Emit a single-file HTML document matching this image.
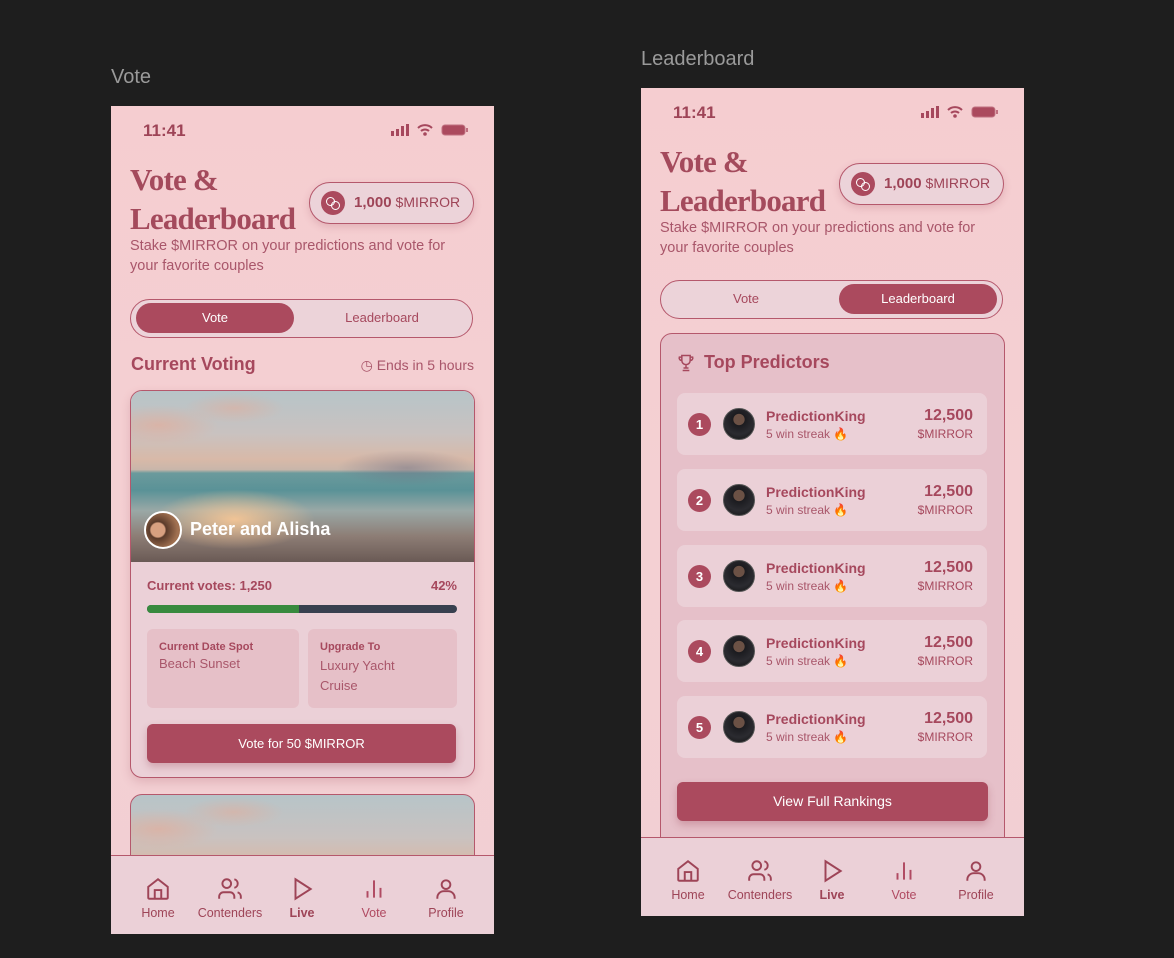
<!DOCTYPE html>
<html><head><meta charset="utf-8"><style>
*{margin:0;padding:0;box-sizing:border-box}
body{width:1174px;height:958px;background:#1e1e1e;position:relative;overflow:hidden;font-family:"Liberation Sans",sans-serif;color:#a6485d}
.abs{position:absolute}
.lbl{position:absolute;color:#9a9a9a;font-size:20px}
.phone{position:absolute;width:383px;height:828px;background:linear-gradient(180deg,#f5cdd0 0%,#f4d0d3 50%,#f2cfd3 100%);overflow:hidden}
.time{position:absolute;left:32px;top:15px;font-size:17px;font-weight:bold;color:#9e4457}
.title{position:absolute;left:19px;font-family:"Liberation Serif",serif;font-size:31px;font-weight:bold;color:#a44a5c;line-height:40px;letter-spacing:-0.8px}
.sub{position:absolute;left:19px;font-size:14.5px;line-height:20px;color:#a9566a;width:340px}
.pill{position:absolute;width:165px;height:42px;border:1.5px solid #b5586c;border-radius:21px;background:#ecd3d9;box-shadow:0 3px 8px rgba(150,60,80,.2)}
.pill .c{position:absolute;left:11px;top:8px;width:24px;height:24px;border-radius:50%;background:#ab4a5e}
.pill .c:before,.pill .c:after{content:"";position:absolute;width:7px;height:7px;border:1.5px solid #fff;border-radius:50%}
.pill .c:before{left:5px;top:6px}.pill .c:after{left:10px;top:10px}
.pill .t{position:absolute;left:44px;top:11px;font-size:15px;font-weight:bold;color:#9e4457}
.pill .t span{font-weight:normal;font-size:14px;margin-left:4px}
.tog{position:absolute;left:19px;width:343px;height:39px;border:1.5px solid #b5586c;border-radius:20px;background:#ecd3d9}
.tog .a{position:absolute;top:3px;height:30px;width:158px;border-radius:15px;background:#ab4a5e;color:#fff;font-size:13px;text-align:center;line-height:30px}
.tog .i{position:absolute;top:3px;height:30px;font-size:13px;text-align:center;line-height:30px;color:#a6485d}
.nav{position:absolute;left:0;bottom:0;width:383px;height:79px;background:#ebd0d7;border-top:1.5px solid #b5586c}
.nav div{position:absolute;top:20px;width:72px;text-align:center;font-size:12.5px;color:#9e4457}
.nav svg{display:block;margin:0 auto 4px;width:26px;height:26px}
.row{position:absolute;left:16px;width:310px;height:62px;background:#ebd0d7;border-radius:8px}
.row .n{position:absolute;left:11px;top:20px;width:23px;height:23px;border-radius:50%;background:#ab4a5e;color:#fff;font-size:13px;font-weight:bold;text-align:center;line-height:23px}
.row .av{position:absolute;left:46px;top:15px;width:32px;height:32px;border-radius:50%;background:radial-gradient(circle at 50% 35%,#6b5145 0 22%,#1b1b1f 24%,#2b2b30 60%,#111 100%);border:1px solid #555}
.row .nm{position:absolute;left:89px;top:15px;font-size:14px;font-weight:bold;color:#a6485d}
.row .st{position:absolute;left:89px;top:34px;font-size:12px;color:#a9566a}
.row .p{position:absolute;right:14px;top:13px;font-size:16px;font-weight:bold;text-align:right;color:#a6485d;line-height:19px}
.row .p span{display:block;font-size:12px;font-weight:normal}
.btn{position:absolute;background:#ab4a5e;color:#fff;border-radius:6px;text-align:center;font-size:14px;box-shadow:0 4px 8px rgba(150,60,80,.3)}
.beach{background:
radial-gradient(ellipse 60px 20px at 8% 20%,rgba(230,170,150,.6),transparent),
radial-gradient(ellipse 50px 15px at 30% 10%,rgba(230,170,150,.5),transparent),
radial-gradient(ellipse 70px 18px at 80% 45%,rgba(110,110,130,.5),transparent),
radial-gradient(ellipse 80px 30px at 30% 75%,rgba(250,200,150,.9),transparent),
linear-gradient(180deg,#b7c4c8 0%,#c9c2c0 25%,#d8b9a8 40%,#c9b6aa 46%,#6b9a9c 48%,#5a9297 58%,#9aa8a6 70%,#8d7d75 85%,#6a5a55 100%);}
</style></head><body>
<div class="lbl" style="left:111px;top:66px">Vote</div>
<div class="lbl" style="left:641px;top:48px">Leaderboard</div>

<!-- LEFT PHONE -->
<div class="phone" style="left:111px;top:106px">
 <div class="time">11:41</div>
 <svg class="abs" style="left:280px;top:17px" width="78" height="14" viewBox="0 0 78 14"><rect x="0" y="8" width="3" height="5" fill="#a6485d"/><rect x="5" y="6" width="3" height="7" fill="#a6485d"/><rect x="10" y="3" width="3" height="10" fill="#a6485d"/><rect x="15" y="1" width="3" height="12" fill="#a6485d"/><path d="M27 5a10 10 0 0 1 14 0M30 8a6 6 0 0 1 8 0" stroke="#a6485d" stroke-width="2" fill="none"/><circle cx="34" cy="11" r="1.8" fill="#a6485d"/><rect x="51" y="2" width="23" height="10" rx="3" fill="#ab4a5e" stroke="#c07080"/><rect x="75" y="5" width="2" height="4" fill="#c07080"/></svg>
 <div class="title" style="top:54px">Vote &amp;</div>
 <div class="title" style="top:93px">Leaderboard</div>
 <div class="pill" style="left:198px;top:76px"><div class="c"></div><div class="t">1,000<span>$MIRROR</span></div></div>
 <div class="sub" style="top:130px">Stake $MIRROR on your predictions and vote for your favorite couples</div>
 <div class="tog" style="top:193px"><div class="a" style="left:5px">Vote</div><div class="i" style="left:170px;width:162px">Leaderboard</div></div>
 <div class="abs" style="left:20px;top:248px;font-size:18px;font-weight:bold">Current Voting</div>
 <div class="abs" style="right:20px;top:251px;font-size:14px;color:#a9566a">&#9719; Ends in 5 hours</div>
 <div class="abs" style="left:19px;top:284px;width:345px;height:388px;border:1.5px solid #b5586c;border-radius:12px;background:#ebd0d7;overflow:hidden;box-shadow:0 4px 10px rgba(150,60,80,.2)">
  <div class="beach abs" style="left:0;top:0;width:345px;height:171px"></div>
  <div class="abs" style="left:13px;top:120px;width:38px;height:38px;border-radius:50%;border:2px solid #fff;background:radial-gradient(circle at 35% 50%,#d8a080 0 25%,#5a3a2a 30%,#a07050 70%)"></div>
  <div class="abs" style="left:59px;top:128px;color:#fff;font-size:18px;font-weight:bold">Peter and Alisha</div>
  <div class="abs" style="left:16px;top:187px;font-size:13px;font-weight:bold">Current votes: 1,250</div>
  <div class="abs" style="right:17px;top:187px;font-size:13px;font-weight:bold">42%</div>
  <div class="abs" style="left:16px;top:214px;width:310px;height:8px;border-radius:4px;background:#38404f;overflow:hidden"><div style="width:152px;height:8px;background:#388a3e"></div></div>
  <div class="abs" style="left:16px;top:238px;width:152px;height:79px;border-radius:6px;background:#e6c0c8;padding:12px;font-size:11px;font-weight:bold">Current Date Spot<div style="font-weight:normal;font-size:13px;margin-top:3px;color:#a9566a">Beach Sunset</div></div>
  <div class="abs" style="left:177px;top:238px;width:149px;height:79px;border-radius:6px;background:#e6c0c8;padding:12px;font-size:11px;font-weight:bold">Upgrade To<div style="font-weight:normal;font-size:13px;margin-top:3px;line-height:20px;color:#a9566a;width:90px">Luxury Yacht Cruise</div></div>
  <div class="btn" style="left:16px;top:333px;width:309px;height:39px;line-height:39px;font-size:13px">Vote for 50 $MIRROR</div>
 </div>
 <div class="abs beach" style="left:19px;top:688px;width:345px;height:100px;border:1.5px solid #b5586c;border-radius:12px;background-size:100% 171px"></div>
 <div class="nav">
  <div style="left:11px"><svg viewBox="0 0 24 24" fill="none" stroke="#9e4457" stroke-width="1.8"><path d="M3 10l9-7 9 7v10a1 1 0 0 1-1 1H4a1 1 0 0 1-1-1z"/><path d="M9 21v-8h6v8"/></svg>Home</div>
  <div style="left:83px"><svg viewBox="0 0 24 24" fill="none" stroke="#9e4457" stroke-width="1.8"><circle cx="9" cy="7" r="4"/><path d="M2 21v-2a4 4 0 0 1 4-4h6a4 4 0 0 1 4 4v2M16 3.1a4 4 0 0 1 0 7.8M22 21v-2a4 4 0 0 0-3-3.9"/></svg>Contenders</div>
  <div style="left:155px;font-weight:bold"><svg viewBox="0 0 24 24" fill="none" stroke="#9e4457" stroke-width="1.8"><path d="M6 3l14 9-14 9z"/></svg>Live</div>
  <div style="left:227px;color:#b04a62"><svg viewBox="0 0 24 24" fill="none" stroke="#b04a62" stroke-width="1.8"><path d="M6 20v-6M12 20V4M18 20v-9"/></svg>Vote</div>
  <div style="left:299px"><svg viewBox="0 0 24 24" fill="none" stroke="#9e4457" stroke-width="1.8"><circle cx="12" cy="8" r="4"/><path d="M4 21v-1a6 6 0 0 1 6-6h4a6 6 0 0 1 6 6v1"/></svg>Profile</div>
 </div>
</div>

<!-- RIGHT PHONE -->
<div class="phone" style="left:641px;top:88px">
 <div class="time">11:41</div>
 <svg class="abs" style="left:280px;top:17px" width="78" height="14" viewBox="0 0 78 14"><rect x="0" y="8" width="3" height="5" fill="#a6485d"/><rect x="5" y="6" width="3" height="7" fill="#a6485d"/><rect x="10" y="3" width="3" height="10" fill="#a6485d"/><rect x="15" y="1" width="3" height="12" fill="#a6485d"/><path d="M27 5a10 10 0 0 1 14 0M30 8a6 6 0 0 1 8 0" stroke="#a6485d" stroke-width="2" fill="none"/><circle cx="34" cy="11" r="1.8" fill="#a6485d"/><rect x="51" y="2" width="23" height="10" rx="3" fill="#ab4a5e" stroke="#c07080"/><rect x="75" y="5" width="2" height="4" fill="#c07080"/></svg>
 <div class="title" style="top:54px">Vote &amp;</div>
 <div class="title" style="top:93px">Leaderboard</div>
 <div class="pill" style="left:198px;top:75px"><div class="c"></div><div class="t">1,000<span>$MIRROR</span></div></div>
 <div class="sub" style="top:130px">Stake $MIRROR on your predictions and vote for your favorite couples</div>
 <div class="tog" style="top:192px"><div class="i" style="left:5px;width:160px">Vote</div><div class="a" style="left:178px">Leaderboard</div></div>
 <div class="abs" style="left:19px;top:245px;width:345px;height:520px;border:1.5px solid #b5586c;border-radius:12px;background:#e6c0c9">
  <svg class="abs" style="left:15px;top:19px" width="20" height="20" viewBox="0 0 24 24" fill="none" stroke="#a6485d" stroke-width="1.8"><path d="M7 3h10v6a5 5 0 0 1-10 0zM7 5H4a3 3 0 0 0 3 4M17 5h3a3 3 0 0 1-3 4M12 14v4M8 21h8M9 18h6"/></svg>
  <div class="abs" style="left:43px;top:18px;font-size:18px;font-weight:bold">Top Predictors</div>
  <div class="row" style="top:59px"><div class="n">1</div><div class="av"></div><div class="nm">PredictionKing</div><div class="st">5 win streak 🔥</div><div class="p">12,500<span>$MIRROR</span></div></div>
  <div class="row" style="top:135px"><div class="n">2</div><div class="av"></div><div class="nm">PredictionKing</div><div class="st">5 win streak 🔥</div><div class="p">12,500<span>$MIRROR</span></div></div>
  <div class="row" style="top:211px"><div class="n">3</div><div class="av"></div><div class="nm">PredictionKing</div><div class="st">5 win streak 🔥</div><div class="p">12,500<span>$MIRROR</span></div></div>
  <div class="row" style="top:286px"><div class="n">4</div><div class="av"></div><div class="nm">PredictionKing</div><div class="st">5 win streak 🔥</div><div class="p">12,500<span>$MIRROR</span></div></div>
  <div class="row" style="top:362px"><div class="n">5</div><div class="av"></div><div class="nm">PredictionKing</div><div class="st">5 win streak 🔥</div><div class="p">12,500<span>$MIRROR</span></div></div>
  <div class="btn" style="left:16px;top:448px;width:311px;height:39px;line-height:39px">View Full Rankings</div>
 </div>
 <div class="nav">
  <div style="left:11px"><svg viewBox="0 0 24 24" fill="none" stroke="#9e4457" stroke-width="1.8"><path d="M3 10l9-7 9 7v10a1 1 0 0 1-1 1H4a1 1 0 0 1-1-1z"/><path d="M9 21v-8h6v8"/></svg>Home</div>
  <div style="left:83px"><svg viewBox="0 0 24 24" fill="none" stroke="#9e4457" stroke-width="1.8"><circle cx="9" cy="7" r="4"/><path d="M2 21v-2a4 4 0 0 1 4-4h6a4 4 0 0 1 4 4v2M16 3.1a4 4 0 0 1 0 7.8M22 21v-2a4 4 0 0 0-3-3.9"/></svg>Contenders</div>
  <div style="left:155px;font-weight:bold"><svg viewBox="0 0 24 24" fill="none" stroke="#9e4457" stroke-width="1.8"><path d="M6 3l14 9-14 9z"/></svg>Live</div>
  <div style="left:227px;color:#b04a62"><svg viewBox="0 0 24 24" fill="none" stroke="#b04a62" stroke-width="1.8"><path d="M6 20v-6M12 20V4M18 20v-9"/></svg>Vote</div>
  <div style="left:299px"><svg viewBox="0 0 24 24" fill="none" stroke="#9e4457" stroke-width="1.8"><circle cx="12" cy="8" r="4"/><path d="M4 21v-1a6 6 0 0 1 6-6h4a6 6 0 0 1 6 6v1"/></svg>Profile</div>
 </div>
</div>
</body></html>
